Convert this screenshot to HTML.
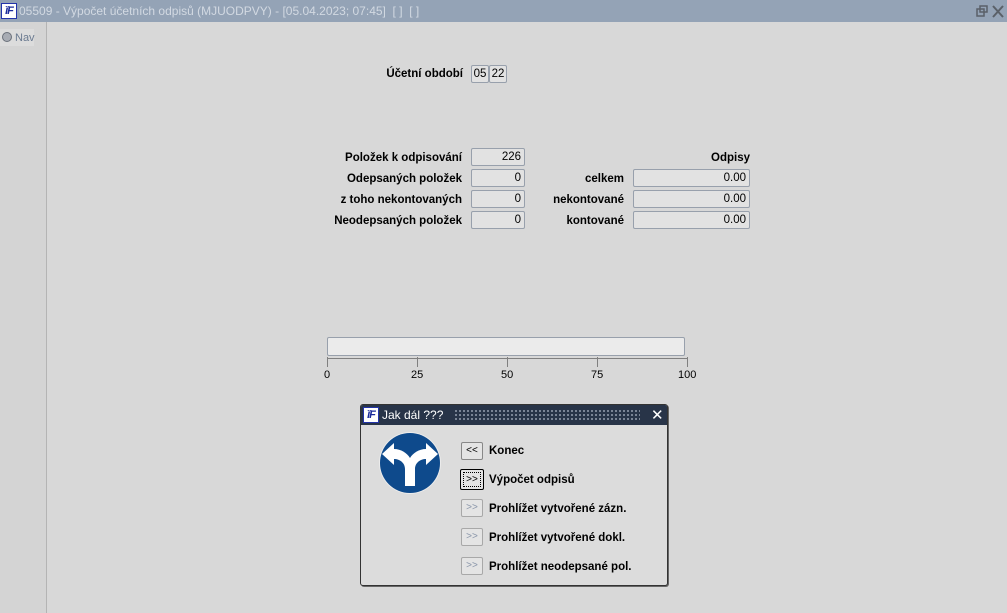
<!DOCTYPE html>
<html><head><meta charset="utf-8"><style>
*{margin:0;padding:0;box-sizing:border-box}
body{width:1007px;height:613px;background:#d8d8d8;font-family:"Liberation Sans",sans-serif;position:relative;overflow:hidden;font-size:11px;color:#000}
.a{position:absolute}
.tb{left:0;top:0;width:1007px;height:22px;background:#94a3b6}
.tt{left:19px;top:4px;color:#d2d9e2;font-size:12px;white-space:nowrap}
.logo{width:16px;height:16px;background:#fff;border:1px solid #2233aa;color:#1a2a9a;font-style:italic;font-weight:bold;font-size:11px;line-height:14px;text-align:center;letter-spacing:-1px}
.side{left:0;top:22px;width:47px;height:591px;background:#d4d4d4;border-right:1px solid #b4b4b4}
.lbl{font-weight:bold;text-align:right;white-space:nowrap;font-size:11.5px}
.f{border:1px solid #98a0ac;border-radius:2px;background:#e2e2e2;text-align:right;padding-right:3px;line-height:16px;height:18px;font-size:11.5px}
.tick{width:1px;height:10px;background:#808080;top:357px}
.sc{top:369px;font-size:11px}
.btn{width:22px;height:18px;border:1px solid #a8a8a8;border-radius:2px;background:#e4e4e4;font-size:10px;text-align:center;line-height:15px;color:#8a96aa}
.bl{font-weight:bold;font-size:11.5px;white-space:nowrap}
</style></head><body>
<div class="a tb"></div>
<div class="a logo" style="left:1px;top:3px">ĭF</div>
<div class="a tt">05509 - Výpočet účetních odpisů (MJUODPVY) - [05.04.2023; 07:45]&nbsp; [ ]&nbsp; [ ]</div>
<svg class="a" style="left:976px;top:5px" width="28" height="13"><rect x="1" y="4" width="7" height="7" fill="none" stroke="#5a6068" stroke-width="1.5"/><rect x="4" y="1" width="7" height="6" fill="none" stroke="#5a6068" stroke-width="1.5"/><path d="M17 1L27 12M27 1L17 12" stroke="#5a6068" stroke-width="2"/></svg>
<div class="a side"></div>
<div class="a" style="left:0;top:29px;width:34px;height:17px;background:#dcdcdc"></div>
<div class="a" style="left:2px;top:32px;width:10px;height:10px;border-radius:50%;background:#a8acb4;border:1px solid #6a707a"></div>
<div class="a" style="left:15px;top:32px;color:#6a7a90;font-size:11px">Nav</div>

<div class="a lbl" style="left:380px;top:68px;width:83px">Účetní období</div>
<div class="a f" style="left:471px;top:65px;width:18px;text-align:center;padding:0">05</div>
<div class="a f" style="left:489px;top:65px;width:18px;text-align:center;padding:0">22</div>

<div class="a lbl" style="left:300px;top:152px;width:162px">Položek k odpisování</div>
<div class="a lbl" style="left:300px;top:173px;width:162px">Odepsaných položek</div>
<div class="a lbl" style="left:300px;top:194px;width:162px">z toho nekontovaných</div>
<div class="a lbl" style="left:300px;top:215px;width:162px">Neodepsaných položek</div>
<div class="a f" style="left:471px;top:148px;width:54px">226</div>
<div class="a f" style="left:471px;top:169px;width:54px">0</div>
<div class="a f" style="left:471px;top:190px;width:54px">0</div>
<div class="a f" style="left:471px;top:211px;width:54px">0</div>
<div class="a lbl" style="left:650px;top:152px;width:100px">Odpisy</div>
<div class="a lbl" style="left:524px;top:173px;width:100px">celkem</div>
<div class="a lbl" style="left:524px;top:194px;width:100px">nekontované</div>
<div class="a lbl" style="left:524px;top:215px;width:100px">kontované</div>
<div class="a f" style="left:633px;top:169px;width:117px">0.00</div>
<div class="a f" style="left:633px;top:190px;width:117px">0.00</div>
<div class="a f" style="left:633px;top:211px;width:117px">0.00</div>

<div class="a" style="left:327px;top:337px;width:358px;height:19px;border:1px solid #98a0ac;border-radius:2px;background:#ebebeb"></div>
<div class="a" style="left:327px;top:358px;width:361px;height:1px;background:#808080"></div>
<div class="a tick" style="left:327px"></div><div class="a tick" style="left:417px"></div><div class="a tick" style="left:507px"></div><div class="a tick" style="left:597px"></div><div class="a tick" style="left:687px"></div>
<div class="a sc" style="left:324px">0</div><div class="a sc" style="left:411px">25</div><div class="a sc" style="left:501px">50</div><div class="a sc" style="left:591px">75</div><div class="a sc" style="left:678px">100</div>

<div class="a" style="left:360px;top:404px;width:308px;height:182px;background:#dcdcdc;border:1px solid #333;border-radius:3px;box-shadow:1px 1px 0 #666"></div>
<div class="a" style="left:361px;top:405px;width:306px;height:20px;background:#283448;border-radius:2px 2px 0 0"></div>
<div class="a logo" style="left:363px;top:407px">ĭF</div>
<div class="a" style="left:382px;top:408px;color:#fff;font-size:12px">Jak dál ???</div>
<div class="a" style="left:454px;top:409px;width:186px;height:11px;background-image:radial-gradient(#8a94a4 0.8px,transparent 1.2px);background-size:4px 4px"></div>
<div class="a" style="left:651px;top:406px;color:#fff;font-size:15px">✕</div>
<svg class="a" style="left:378px;top:431px" width="64" height="64" viewBox="0 0 64 64"><circle cx="32" cy="32" r="31" fill="#ececec"/><circle cx="32" cy="32" r="30" fill="#0e4a8c"/><path d="M27 55V38C27 32 22 28 16 28V34L4 23L16 12V18C23 18 29 22 32 27C35 22 41 18 48 18V12L60 23L48 34V28C42 28 37 32 37 38V55Z" fill="#fff"/></svg>
<div class="a btn" style="left:461px;top:442px;color:#000;border-color:#888">&lt;&lt;</div>
<div class="a bl" style="left:489px;top:445px">Konec</div>
<div class="a btn" style="left:460px;top:469px;width:24px;height:21px;color:#000;border:1px solid #000;padding-top:1px"><div style="border:1px dotted #000;margin:1px 2px;line-height:13px">&gt;&gt;</div></div>
<div class="a bl" style="left:489px;top:474px">Výpočet odpisů</div>
<div class="a btn" style="left:461px;top:499px">&gt;&gt;</div>
<div class="a bl" style="left:489px;top:503px">Prohlížet vytvořené zázn.</div>
<div class="a btn" style="left:461px;top:528px">&gt;&gt;</div>
<div class="a bl" style="left:489px;top:532px">Prohlížet vytvořené dokl.</div>
<div class="a btn" style="left:461px;top:557px">&gt;&gt;</div>
<div class="a bl" style="left:489px;top:561px">Prohlížet neodepsané pol.</div>
</body></html>
